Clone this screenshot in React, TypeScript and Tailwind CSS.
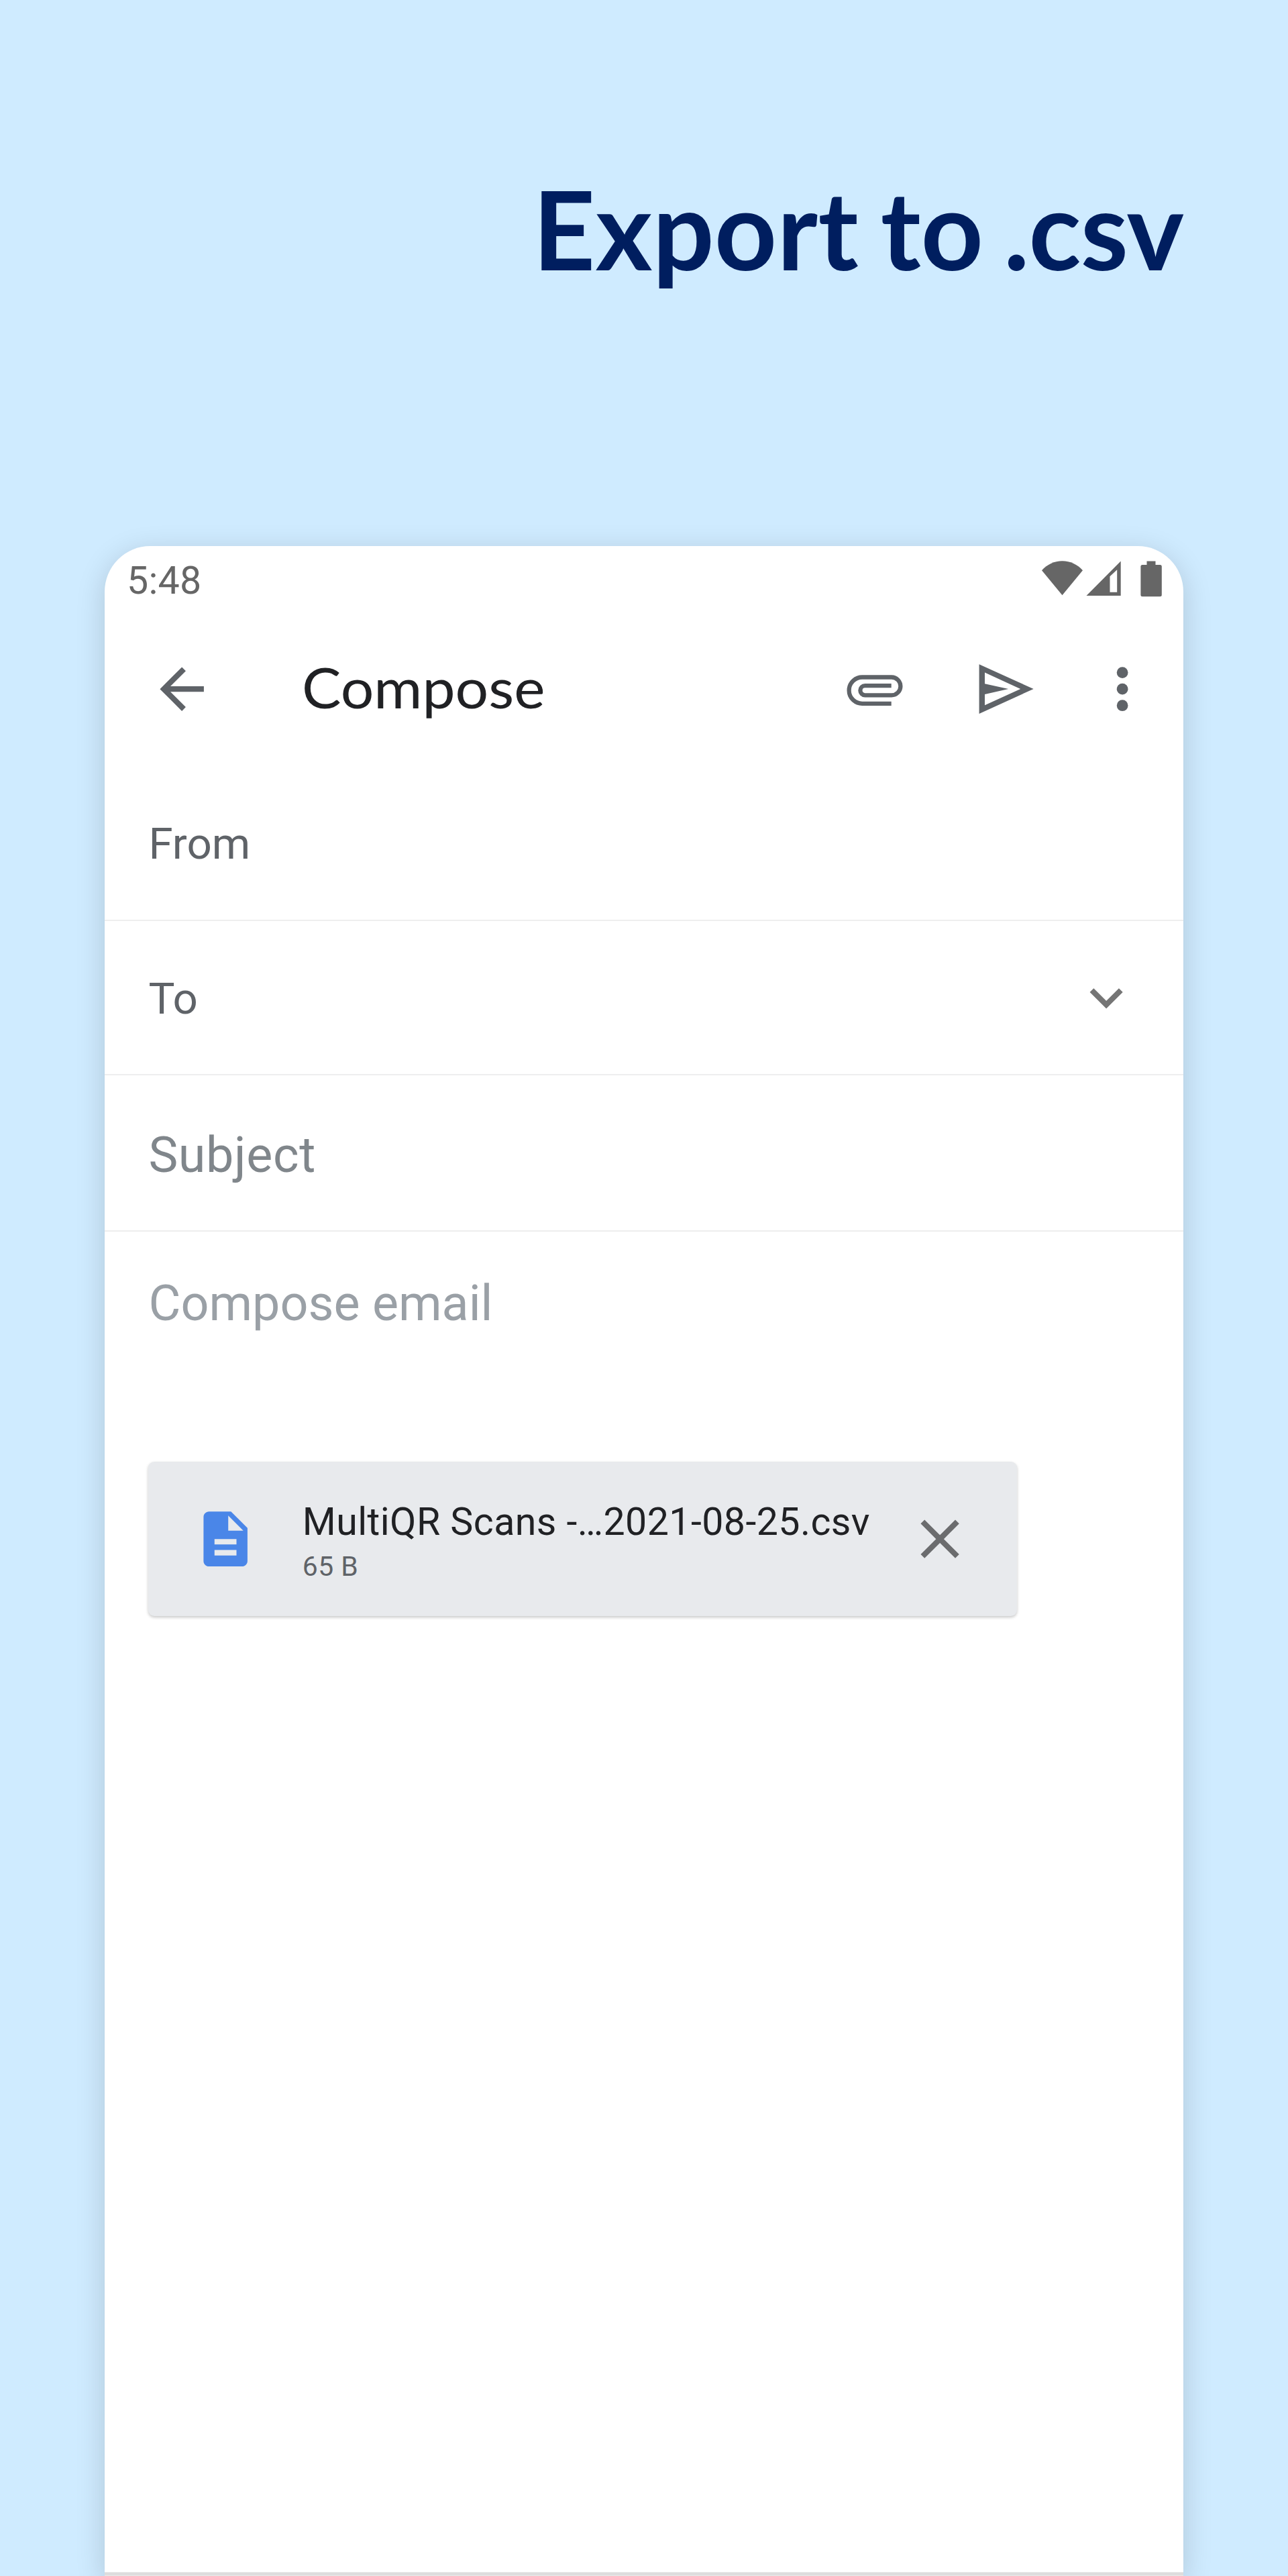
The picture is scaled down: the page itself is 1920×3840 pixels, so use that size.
import type { ReactNode } from "react";

function Icon({ children, className = "" }: { children: ReactNode; className?: string }) {
  return (
    <svg viewBox="0 0 24 24" fill="currentColor" className={`h-[98.27px] w-[98.27px] shrink-0 ${className}`}>
      {children}
    </svg>
  );
}

function StatusBar() {
  return (
    <div className="flex h-[98px] items-start pl-[33px] text-[#666666]">
      <span className="mt-[18px] w-[1363.5px] text-[57.3px] leading-[67px] tracking-[0.2px]">5:48</span>
      <svg viewBox="0 0 180 54" className="mt-[22px] h-[54px] w-[180px] shrink-0" fill="currentColor">
        <path d="M0 14.3C8 5.5 18.500 .3 30.500 .3S53 5.500 61 14.300L30.500 51.300Z" />
        <path fillRule="evenodd" d="M66.500 52 117.700 .5V52ZM101.500 23.300V46.700H112.200V13.300Z" />
        <path d="M156.500 .6H169.500V6H176.300a2.500 2.500 0 0 1 2.500 2.500V50.700a2.500 2.500 0 0 1-2.500 2.500H149.900a2.500 2.500 0 0 1-2.500-2.500V8.500a2.500 2.500 0 0 1 2.500-2.500H156.500Z" />
      </svg>
    </div>
  );
}

function Toolbar() {
  return (
    <div className="flex h-[230px] items-center pl-[65.7px] text-[#5f6368]">
      <Icon>
        <path d="M20 11H7.830l5.590-5.590L12 4l-8 8 8 8 1.410-1.410L7.830 13H20v-2z" />
      </Icon>
      <h2 className="mb-[6px] ml-[130px] w-[805px] origin-left scale-x-[1.056] font-['Lato'] text-[83px] leading-[100px] text-[#202124]">
        Compose
      </h2>
      <svg viewBox="0 0 98 98" className="h-[98px] w-[98px] shrink-0" fill="none" stroke="currentColor" strokeWidth="6.300">
        <path d="M73.700 70.800H30.300a19.650 19.650 0 0 1 0-39.300H74a13.400 13.400 0 0 1 0 26.800H34.500a7.100 7.100 0 0 1 0-14.200H73.700" />
      </svg>
      <svg viewBox="0 0 98 98" className="ml-[98px] h-[98px] w-[98px] shrink-0" fill="currentColor">
        <path fillRule="evenodd" d="M8.600 12.200 89.700 49 8.600 85.900ZM17 24.600V41.300L52.200 49 17 57V73.300L70.200 49Z" />
      </svg>
      <Icon className="ml-[75px]">
        <circle cx="12" cy="6" r="2.050" />
        <circle cx="12" cy="12" r="2.050" />
        <circle cx="12" cy="18" r="2.050" />
      </Icon>
    </div>
  );
}

function Attachment() {
  return (
    <div className="mt-[192px] ml-[64.5px] flex h-[230px] w-[1295px] items-center rounded-[9px] bg-[#e8eaed] pl-[66.5px] shadow-[0_2px_4px_rgba(0,0,0,0.22)]">
      <Icon className="text-[#4a86e8]">
        <path d="M14 2H6c-1.100 0-1.990.9-1.990 2L4 20c0 1.100.89 2 1.990 2H18c1.100 0 2-.9 2-2V8l-6-6zm2 16H8v-2h8v2zm0-4H8v-2h8v2zm-3-5V3.500L18.500 9H13z" />
      </Icon>
      <div className="ml-[65.5px] flex w-[901px] flex-col pt-[15px]">
        <span className="text-[57.3px] leading-[67px] tracking-[0.42px] whitespace-nowrap text-[#202124]">
          MultiQR Scans -…2021-08-25.csv
        </span>
        <span className="text-[40.9px] leading-[66px] tracking-[0.5px] text-[#5f6368]">65 B</span>
      </div>
      <Icon className="text-[#6b6c6e]">
        <path d="M19 6.410L17.590 5 12 10.590 6.410 5 5 6.410 10.590 12 5 17.590 6.410 19 12 13.410 17.590 19 19 17.590 13.410 12z" />
      </Icon>
    </div>
  );
}

export default function App() {
  return (
    <main className="flex h-[3840px] w-[1920px] flex-col overflow-hidden bg-[#cfebff] font-['Roboto']">
      <h1 className="mt-[244px] h-[570px] shrink-0 pr-[156px] text-right font-['Lato'] text-[162px] leading-[194px] font-bold [word-spacing:-7px] text-[#001e5f]">
        <span className="tracking-[0.4px]">Export to </span>
        <span className="-ml-[3px] -tracking-[1px]">.csv</span>
      </h1>
      <section className="mx-[156px] flex h-[3026px] shrink-0 flex-col rounded-t-[68px] bg-white shadow-[0_10px_44px_rgba(0,0,0,0.16)]">
        <StatusBar />
        <Toolbar />
        <div className="flex h-[231px] items-center border-b-2 border-[#eeeeee] pt-[4px] pl-[65.5px] text-[65.5px] text-[#5f6368]">
          From
        </div>
        <div className="flex h-[230px] items-center border-b-2 border-[#eeeeef] pt-[5px] pl-[65.5px] text-[65.5px] text-[#5f6368]">
          <span className="w-[1378.5px]">To</span>
          <Icon className="mb-[5px] text-[#757575]">
            <path d="M16.590 8.590L12 13.170 7.410 8.590 6 10l6 6 6-6z" />
          </Icon>
        </div>
        <div className="flex h-[233px] items-center border-b-2 border-[#eeeeee] pt-[7px] pl-[65.5px] text-[73.7px] tracking-[0.6px] text-[#80868b]">
          Subject
        </div>
        <div className="mt-[63px] pl-[65.5px] text-[73.7px] leading-[88px] text-[#9aa0a6]">Compose email</div>
        <Attachment />
        <div className="mt-auto h-[6px] border-y border-[#e9e9e9] bg-[#dddddd]" />
      </section>
    </main>
  );
}
